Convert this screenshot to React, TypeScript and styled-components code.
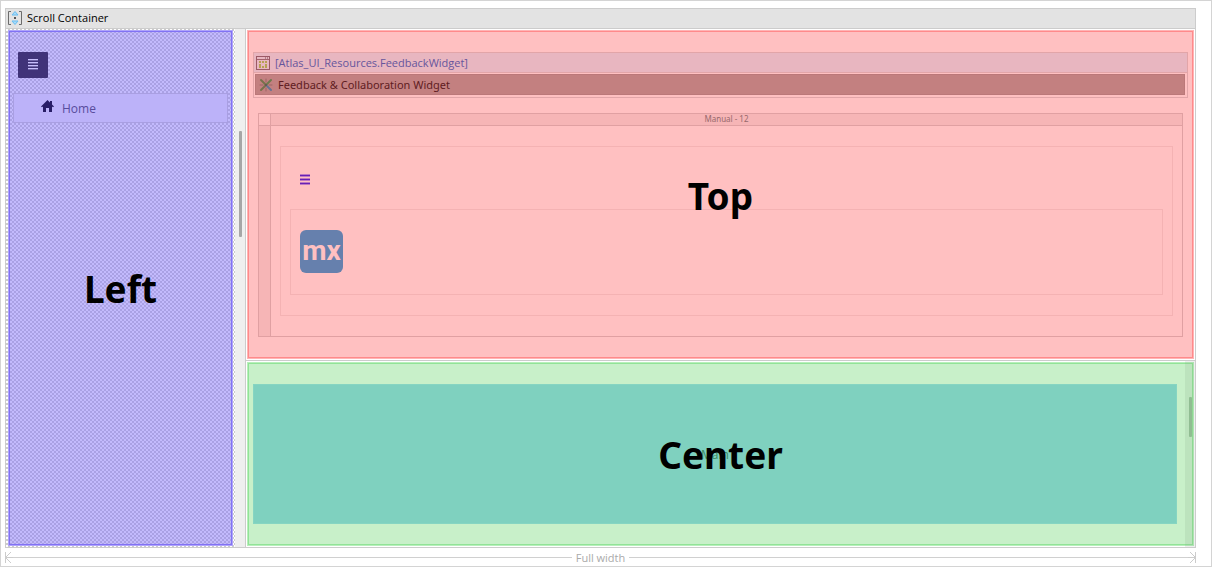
import React from "react";
import styled, { createGlobalStyle } from "styled-components";

const GlobalStyle = createGlobalStyle`
  *, *::before, *::after { box-sizing: border-box; }
  body { margin: 0; background: #fff; font-family: "Open Sans", "Noto Sans", sans-serif; }
  button { font: inherit; padding: 0; border: 0; background: none; cursor: pointer; }
  svg { display: block; flex: none; }
`;

const Frame = styled.div`
  display: flex;
  flex-direction: column;
  min-height: 100vh;
  padding: 7px 15px 0 4px;
  border: 1px solid #d4d4d4;
`;

const Container = styled.section`
  display: flex;
  flex: 1;
  flex-direction: column;
  border: 1px solid #ccc;
`;

const TitleBar = styled.header`
  display: flex;
  align-items: center;
  gap: 4px;
  height: 20px;
  padding: 0 0 1px 1px;
  border-bottom: 1px solid #ccc;
  background: #e3e3e3;
  color: #000;
  font-size: 11px;
  line-height: 16px;
`;

const Body = styled.div`
  display: flex;
  flex: 1;
`;

const Sidebar = styled.div`
  display: flex;
  width: 229px;
  padding: 1px 2px;
  background: repeating-conic-gradient(#ccc 0 25%, #fff 0 50%) 0 0 / 4px 4px;
`;

const Region = styled.div<{ $fill: string; $edge: string; $soft: string; $padding: string }>`
  position: relative;
  flex: 1;
  padding: ${(p) => p.$padding};
  background: ${(p) => p.$fill};
  box-shadow: inset 0 0 0 1px ${(p) => p.$soft}, inset 0 0 0 2px ${(p) => p.$edge};
`;

const RegionLabel = styled.strong`
  position: absolute;
  inset: 0;
  display: flex;
  align-items: center;
  justify-content: center;
  padding-top: 2px;
  color: #000;
  font-family: "Noto Sans", sans-serif;
  font-size: 37px;
  line-height: 48px;
  pointer-events: none;
`;

const MenuButton = styled.button<{ $solid?: boolean }>`
  display: flex;
  align-items: flex-start;
  justify-content: center;
  width: 30px;
  height: 26px;
  padding-top: 7px;
  border-radius: 1px;
  background: ${(p) => (p.$solid ? "#403379" : "transparent")};
`;

const NavItem = styled.a`
  display: flex;
  align-items: flex-start;
  gap: 8px;
  height: 30px;
  margin-top: 15px;
  padding: 6px 0 0 27px;
  border: 1px solid #a99fe2;
  background: #bcb2f9;
  color: #584c9c;
  font-size: 12px;
  line-height: 18px;
  text-decoration: none;
`;

const SidebarTools = styled.div`
  padding: 0 5px;
`;

const Gutter = styled.div`
  width: 11px;
  padding: 102px 0 0 4px;
  border-right: 1px solid #ccc;
  background: #efefef;
`;

const Thumb = styled.div<{ $color: string; $length: number }>`
  width: 3px;
  height: ${(p) => p.$length}px;
  border-radius: 1px;
  background: ${(p) => p.$color};
`;

const MainColumn = styled.div`
  display: flex;
  flex: 1;
  flex-direction: column;
`;

const TopPane = styled.div`
  display: flex;
  padding: 1px;
  border-bottom: 1px solid #ccc;
`;

const CenterPane = styled.div`
  display: flex;
  flex: 1;
  padding: 1px;
  background: linear-gradient(#efefef, #efefef) right / 10px 100% no-repeat;
`;

const WidgetBox = styled.div`
  border: 1px solid #e2a5a8;
  background: #ffc0c1;
`;

const WidgetName = styled.div`
  display: flex;
  align-items: center;
  gap: 5px;
  height: 20px;
  padding-left: 2px;
  border-bottom: 1px solid #e2a5a8;
  background: #e8b6c0;
  color: #66559c;
  font-size: 11px;
  line-height: 18px;
`;

const WidgetCaption = styled.div`
  display: flex;
  align-items: center;
  gap: 5px;
  height: 21px;
  margin: 1px 2px 2px 1px;
  padding-left: 3px;
  border: 1px solid #bb7879;
  background: #c38080;
  color: #5f1c22;
  font-family: "Noto Sans", sans-serif;
  font-size: 11px;
  line-height: 18px;
`;

const LayoutGrid = styled.div`
  display: grid;
  grid-template-columns: 12px 1fr;
  grid-template-rows: 12px 1fr;
  margin: 15px 5px 0;
  border: 1px solid #e0a0a2;
`;

const Corner = styled.div`
  border-right: 1px solid #e0a0a2;
  border-bottom: 1px solid #e0a0a2;
`;

const ColumnHead = styled.div`
  border-bottom: 1px solid #e0a0a2;
  background: #f6b5b6;
  color: #96696c;
  font-family: "Noto Sans", sans-serif;
  font-size: 8px;
  line-height: 10px;
  text-align: center;
`;

const RowHead = styled.div`
  border-right: 1px solid #e0a0a2;
  background: #f6b5b6;
`;

const Cell = styled.div`
  padding: 20px 9px;
`;

const OuterBox = styled.div`
  padding: 20px 9px;
  border: 1px solid #f4b2b3;
`;

const LogoBox = styled.div`
  margin-top: 16px;
  padding: 20px 9px 21px;
  border: 1px solid #f4b2b3;
`;

const Logo = styled.div`
  display: flex;
  align-items: center;
  justify-content: center;
  width: 43px;
  height: 43px;
  padding-bottom: 2px;
  border-radius: 6px;
  background: #6680ad;
  color: #ffc0c1;
  font: bold 28px/40px Roboto, sans-serif;
`;

const CenterBody = styled.div`
  display: flex;
  height: 100%;
`;

const Placeholder = styled.div`
  display: flex;
  flex: 1;
  align-items: center;
  justify-content: center;
  border: 1px solid #86d5c2;
  background: #7fd1bf;
  color: #3c8a62;
  font-size: 12px;
`;

const ScrollTrack = styled.div`
  position: absolute;
  top: 0;
  right: 0;
  bottom: 0;
  width: 9px;
  padding: 35px 0 0 4px;
  background: rgba(130, 160, 130, 0.16);
`;

const Ruler = styled.footer`
  display: flex;
  align-items: center;
  height: 18px;
  color: #aaa;
  font-size: 11px;
  line-height: 18px;
`;

const RulerLine = styled.div`
  flex: 1;
  height: 1px;
  background: #d0d0d0;
`;

const RulerText = styled.span`
  padding: 2px 4px 0;
`;

const ScrollIcon = () => (
  <svg width="16" height="16" viewBox="0 0 16 16" fill="none">
    <path d="M4 1.500H1.500v13H4M12 1.500h2.500v13H12" stroke="#6c6c6c" />
    <path d="M8 1.500l3 3.500H5zM8 14.500l3-3.500H5z" fill="#a8dcfa" stroke="#68bdf0" />
    <rect x="7" y="7" width="2" height="2" fill="#555" />
  </svg>
);

const Bars = () => (
  <svg width="10" height="12" viewBox="0 0 10 12">
    {[1, 5, 9].map((y) => (
      <g key={y}>
        <rect y={y - 1} width="10" height="3" fill="#bd78c2" />
        <rect y={y} width="10" height="1" fill="#6820b4" />
      </g>
    ))}
  </svg>
);

const ListBars = () => (
  <svg width="10" height="12" viewBox="0 0 10 12">
    {[0, 3, 6, 9].map((y) => (
      <g key={y}>
        <rect y={y} width="10" height="2" fill="#7166a8" />
        <rect y={y} width="10" height="1" fill="#c6bdfb" />
      </g>
    ))}
  </svg>
);

const HomeIcon = () => (
  <svg width="13" height="13" viewBox="0 0 13 13">
    <path d="M6.500 0L9 2.500V1h2v3.500l2 2-1 .7-1-.8V12H8V8H5v4H2V6.400l-1 .8-1-.7z" fill="#281d66" />
  </svg>
);

const SnippetIcon = () => (
  <svg width="14" height="14" viewBox="0 0 14 14" fill="none">
    <rect x=".5" y=".5" width="13" height="13" stroke="#9c5965" />
    <path d="M1 3.500h12" stroke="#a5636d" />
    <path d="M9 2h1M11 2h1" stroke="#7f4852" />
    <path
      d="M3 6h2M6 6h2M9 6h2M3 11h2M6 11h2M9 11h2M4 8v2M10 8v2"
      stroke="#b7a052"
      strokeWidth="2"
    />
  </svg>
);

const WidgetIcon = () => (
  <svg width="14" height="14" viewBox="0 0 14 14" strokeWidth="2" strokeLinecap="round">
    <path d="M7 1v3M7 10v3M1 7h3M10 7h3" stroke="#9d6465" strokeWidth="1" />
    <path d="M2 2l4 4M2 12l4-4" stroke="#77714c" />
    <path d="M12 2L8 6" stroke="#6f7a4d" />
    <path d="M12 12L8 8" stroke="#687391" />
    <circle cx="7" cy="7" r="1" fill="#5e5050" />
  </svg>
);

const ArrowLeft = () => (
  <svg width="8" height="11" viewBox="0 0 8 11" fill="none" stroke="#ccc">
    <path d="M.5 0v11M0 5.500h8M6 0L.5 5.500 6 11" />
  </svg>
);

const ArrowRight = () => (
  <svg width="8" height="11" viewBox="0 0 8 11" fill="none" stroke="#ccc">
    <path d="M7.500 0v11M0 5.500h8M2 0l5.500 5.500L2 11" />
  </svg>
);

export default function App() {
  return (
    <>
      <GlobalStyle />
      <Frame>
        <Container>
          <TitleBar>
            <ScrollIcon />
            Scroll Container
          </TitleBar>
          <Body>
            <Sidebar>
              <Region $fill="rgba(136, 117, 252, 0.5)" $edge="#8172f4" $soft="#b0a5fa" $padding="22px 5px">
                <SidebarTools>
                  <MenuButton $solid aria-label="Toggle sidebar">
                    <ListBars />
                  </MenuButton>
                </SidebarTools>
                <nav>
                  <NavItem href="#home">
                    <HomeIcon />
                    Home
                  </NavItem>
                </nav>
                <RegionLabel>Left</RegionLabel>
              </Region>
            </Sidebar>
            <Gutter>
              <Thumb $color="#a6a6a6" $length={106} />
            </Gutter>
            <MainColumn>
              <TopPane>
                <Region $fill="#ffc0c1" $edge="#ff8a8b" $soft="#ffb4b5" $padding="22px 6px">
                  <WidgetBox>
                    <WidgetName>
                      <SnippetIcon />
                      [Atlas_UI_Resources.FeedbackWidget]
                    </WidgetName>
                    <WidgetCaption>
                      <WidgetIcon />
                      Feedback &amp; Collaboration Widget
                    </WidgetCaption>
                  </WidgetBox>
                  <LayoutGrid>
                    <Corner />
                    <ColumnHead>Manual - 12</ColumnHead>
                    <RowHead />
                    <Cell>
                      <OuterBox>
                        <MenuButton aria-label="Open menu">
                          <Bars />
                        </MenuButton>
                        <LogoBox>
                          <Logo>mx</Logo>
                        </LogoBox>
                      </OuterBox>
                    </Cell>
                  </LayoutGrid>
                  <RegionLabel>Top</RegionLabel>
                </Region>
              </TopPane>
              <CenterPane>
                <Region $fill="#c8f0c9" $edge="#91e397" $soft="#b8efbb" $padding="22px 17px 22px 6px">
                  <CenterBody>
                    <Placeholder>Main</Placeholder>
                  </CenterBody>
                  <ScrollTrack>
                    <Thumb $color="#90bd92" $length={40} />
                  </ScrollTrack>
                  <RegionLabel>Center</RegionLabel>
                </Region>
              </CenterPane>
            </MainColumn>
          </Body>
        </Container>
        <Ruler>
          <ArrowLeft />
          <RulerLine />
          <RulerText>Full width</RulerText>
          <RulerLine />
          <ArrowRight />
        </Ruler>
      </Frame>
    </>
  );
}
